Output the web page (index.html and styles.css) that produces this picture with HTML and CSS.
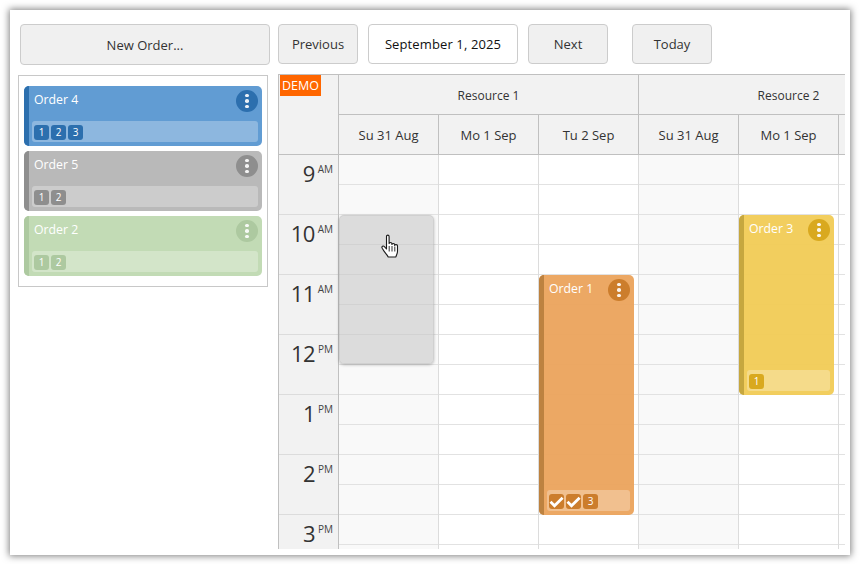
FILE: index.html
```html
<!DOCTYPE html>
<html lang="en">
<head>
<meta charset="utf-8">
<title>Scheduler</title>
<link rel="stylesheet" href="styles.css">
</head>
<body>
<div class="window">
  <div class="toolbar">
    <button class="btn btn-new">New Order...</button>
    <button class="btn btn-nav">Previous</button>
    <div class="date">September 1, 2025</div>
    <button class="btn btn-nav">Next</button>
    <button class="btn btn-nav btn-today">Today</button>
  </div>
  <div class="main">
    <div class="queue">
      <div class="card blue">
        <div class="bar"></div>
        <div class="title">Order 4</div>
        <div class="menu"><i></i><i></i><i></i></div>
        <div class="tags"><span class="tag">1</span><span class="tag">2</span><span class="tag">3</span></div>
      </div>
      <div class="card gray">
        <div class="bar"></div>
        <div class="title">Order 5</div>
        <div class="menu"><i></i><i></i><i></i></div>
        <div class="tags"><span class="tag">1</span><span class="tag">2</span></div>
      </div>
      <div class="card green">
        <div class="bar"></div>
        <div class="title">Order 2</div>
        <div class="menu"><i></i><i></i><i></i></div>
        <div class="tags"><span class="tag">1</span><span class="tag">2</span></div>
      </div>
    </div>
    <div class="sched">
      <div class="head">
        <div class="corner"><span class="demo">DEMO</span></div>
        <div class="res res1">Resource 1</div>
        <div class="res res2"><span class="res2-label">Resource 2</span></div>
        <div class="day">Su 31 Aug</div>
        <div class="day">Mo 1 Sep</div>
        <div class="day">Tu 2 Sep</div>
        <div class="day">Su 31 Aug</div>
        <div class="day">Mo 1 Sep</div>
        <div class="day"></div>
      </div>
      <div class="body">
        <div class="times">
          <div class="hour"><b>9</b><small>AM</small></div>
          <div class="hour"><b>10</b><small>AM</small></div>
          <div class="hour"><b>11</b><small>AM</small></div>
          <div class="hour"><b>12</b><small>PM</small></div>
          <div class="hour"><b>1</b><small>PM</small></div>
          <div class="hour"><b>2</b><small>PM</small></div>
          <div class="hour"><b>3</b><small>PM</small></div>
        </div>
        <div class="col off">
          <div class="ghost"></div>
          <svg class="cursor" width="20" height="26" viewBox="0 0 20 26">
            <path d="M5.500 2.500c0-1.800 2.600-1.800 2.600 0v7c0-1.300 2.800-1.300 2.800 0v1c0-1.300 2.800-1.300 2.800 0v1c0-1.200 2.800-1.200 2.800 .3v5.500c0 2.500-1.200 3.500-1.600 5.700H7.200c-.8-2-2.600-3.400-4-5.600l-2-3.200c-1-1.700 1-2.900 2.200-1.600L5.500 15z" fill="#fff" stroke="#1a1a1a" stroke-width="1.100" stroke-linejoin="round"/>
            <path d="M8.200 12v5.500M11 12v5.500M13.800 12.500v5" stroke="#1a1a1a" stroke-width=".9" fill="none"/>
          </svg>
        </div>
        <div class="col"></div>
        <div class="col">
          <div class="event orange">
            <div class="bar"></div>
            <div class="title">Order 1</div>
            <div class="menu"><i></i><i></i><i></i></div>
            <div class="tags">
              <span class="tag"><svg width="15" height="15" viewBox="0 0 15 15"><path d="M1.500 7.800l4 3.900L13.600 3.800" fill="none" stroke="#fff" stroke-width="2.800"/></svg></span>
              <span class="tag"><svg width="15" height="15" viewBox="0 0 15 15"><path d="M1.500 7.800l4 3.900L13.600 3.800" fill="none" stroke="#fff" stroke-width="2.800"/></svg></span>
              <span class="tag">3</span>
            </div>
          </div>
        </div>
        <div class="col off"></div>
        <div class="col">
          <div class="event yellow">
            <div class="bar"></div>
            <div class="title">Order 3</div>
            <div class="menu"><i></i><i></i><i></i></div>
            <div class="tags"><span class="tag">1</span></div>
          </div>
        </div>
        <div class="col"></div>
      </div>
    </div>
  </div>
</div>
</body>
</html>
```
FILE: styles.css
```css
* { box-sizing: border-box; }
html, body { margin: 0; padding: 0; background: #fff; }
body {
  font-family: "Open Sans", sans-serif;
  font-size: 13px;
  color: #333;
  height: 564px;
  overflow: hidden;
}
.window {
  margin: 10px 10px 0;
  width: 840px;
  height: 545px;
  background: #fff;
  box-shadow: 0 0 7px 1px rgba(0, 0, 0, .5);
  overflow: hidden;
}
.toolbar {
  display: flex;
  align-items: flex-start;
  padding: 14px 0 0 10px;
  height: 64px;
}
.btn, .date {
  height: 40px;
  border: 1px solid #ccc;
  border-radius: 4px;
  font: 13px "Open Sans", sans-serif;
  color: #333;
  display: flex;
  align-items: center;
  justify-content: center;
  padding: 0;
}
.btn { background: #f0f0f0; }
.btn-new { width: 250px; height: 41px; margin-right: 8px; }
.btn-nav { width: 80px; }
.btn-today { margin-left: 24px; }
.date { width: 150px; margin: 0 10px; background: #fff; color: #111; letter-spacing: .12px; }
.main { display: flex; align-items: flex-start; }
.queue {
  width: 250px;
  margin: 1px 10px 0 8px;
  padding: 10px 5px 10px 5px;
  border: 1px solid #c8c8c8;
  display: flex;
  flex-direction: column;
  gap: 5px;
}
.card, .event {
  position: relative;
  height: 60px;
  border-radius: 5px;
  overflow: hidden;
  color: #fff;
}
.bar { position: absolute; left: 0; top: 0; bottom: 0; width: 5px; }
.title { position: absolute; left: 10px; top: 4px; line-height: 20px; font-size: 12.300px; }
.menu {
  position: absolute;
  right: 4px;
  top: 4px;
  width: 22px;
  height: 22px;
  border-radius: 50%;
  display: flex;
  flex-direction: column;
  align-items: center;
  justify-content: center;
  gap: 2px;
}
.menu i { width: 3.500px; height: 3.500px; border-radius: 50%; background: #fff; opacity: .9; }
.tags {
  position: absolute;
  left: 8px;
  right: 4px;
  bottom: 4px;
  height: 21px;
  padding: 4px 3px 0 2px;
  border-radius: 3px;
  background: rgba(255, 255, 255, .28);
  display: flex;
  gap: 2px;
}
.tag {
  width: 15px;
  height: 15px;
  border-radius: 3px;
  font-size: 10px;
  line-height: 15px;
  text-align: center;
  color: #fff;
  display: block;
}
.tag svg { display: block; }
.blue { background: #619cd3; }
.blue .bar, .blue .menu, .blue .tag { background: #2c6fae; }
.gray { background: #b9b9b9; }
.gray .bar, .gray .menu, .gray .tag { background: #8e8e8e; }
.green { background: #c2dbb5; }
.green .bar, .green .menu, .green .tag { background: #adc9a0; }
.orange { background: rgba(235, 163, 92, .95); }
.orange .bar { background: #bd8240; }
.orange .menu, .orange .tag { background: #cc7d2c; }
.yellow { background: rgba(241, 203, 85, .95); }
.yellow .bar { background: #c6a73f; }
.yellow .menu, .yellow .tag { background: #d9a91f; }

.sched {
  width: 567px;
  height: 475px;
  overflow: hidden;
  border-top: 1px solid #c0c0c0;
  border-left: 1px solid #c0c0c0;
  background: #fff;
}
.head {
  display: grid;
  grid-template-columns: 60px repeat(6, 100px);
  grid-template-rows: 40px 40px;
  width: 660px;
  background: #f2f2f2;
  border-bottom: 1px solid #c0c0c0;
  height: 80px;
}
.corner { grid-row: 1 / 3; border-right: 1px solid #c0c0c0; }
.demo {
  display: block;
  width: 41px;
  height: 21px;
  margin: 0 0 0 1px;
  background: #ff6600;
  color: #fff;
  font-size: 12.500px;
  line-height: 21px;
  text-align: center;
}
.res, .day {
  display: flex;
  align-items: center;
  justify-content: center;
  font-size: 13px;
  border-right: 1px solid #c0c0c0;
}
.res { border-bottom: 1px solid #c0c0c0; font-size: 12px; padding-top: 2px; }
.res1, .res2 { grid-column: span 3; }
.body { display: flex; width: 660px; }
.times { width: 60px; border-right: 1px solid #c0c0c0; background: #f2f2f2; }
.hour {
  height: 60px;
  border-bottom: 1px solid #dcdcdc;
  display: flex;
  justify-content: flex-end;
  padding-right: 5px;
}
.hour b { font-weight: 400; font-size: 22px; line-height: 36px; letter-spacing: -.6px; }
.hour small { font-size: 10px; line-height: 15px; padding: 7px 0 0 3px; color: #444; }
.col {
  position: relative;
  width: 100px;
  height: 420px;
  border-right: 1px solid #dcdcdc;
  background-color: #fff;
  background-image: linear-gradient(to bottom, transparent 29px, #e2e2e2 29px, #e2e2e2 30px);
  background-size: 100% 30px;
}
.off { background-color: #f9f9f9; }
.event { position: absolute; left: 0; width: 95px; }
.orange { top: 120px; height: 240px; }
.yellow { top: 60px; height: 180px; }
.ghost {
  position: absolute;
  left: 0;
  top: 60px;
  width: 95px;
  height: 149px;
  border-radius: 5px;
  background: rgba(200, 200, 200, .6);
  border: 1px solid rgba(0, 0, 0, .05);
  box-shadow: 0 1px 3px rgba(0, 0, 0, .25);
}
.cursor { position: absolute; left: 42px; top: 79px; }
```
